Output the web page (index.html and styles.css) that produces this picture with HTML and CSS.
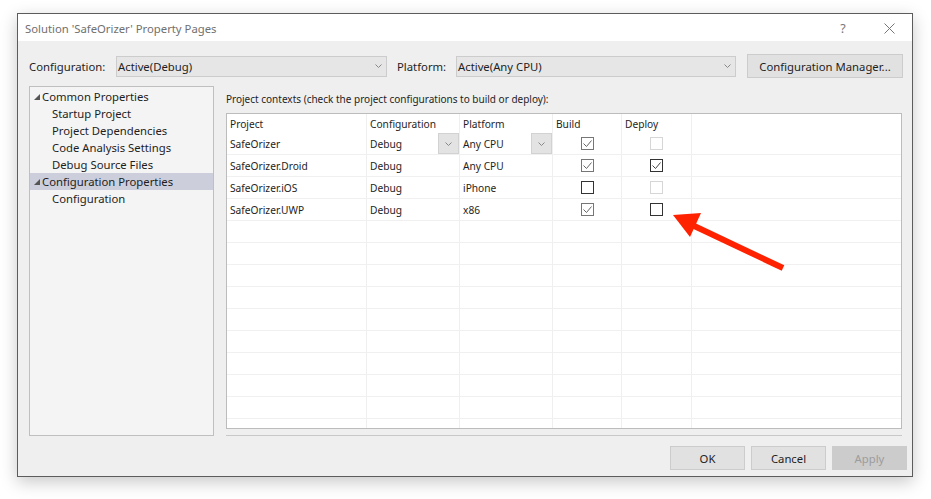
FILE: index.html
```html
<!DOCTYPE html>
<html>
<head>
<meta charset="utf-8">
<title>Solution 'SafeOrizer' Property Pages</title>
<link rel="stylesheet" href="styles.css">
</head>
<body>
<div class="window">
  <div class="titlebar">
    <span class="title">Solution 'SafeOrizer' Property Pages</span>
    <span class="help">?</span>
    <svg class="close" width="11" height="11" viewBox="0 0 11 11"><path d="M0.5 0.5 L10.5 10.5 M10.5 0.5 L0.5 10.5" stroke="#777" stroke-width="1" fill="none"/></svg>
  </div>
  <div class="content">
    <div class="toprow">
      <span class="lbl lbl-config">Configuration:</span>
      <div class="combo combo-config"><span>Active(Debug)</span><svg class="chev" width="7" height="4" viewBox="0 0 7 4"><path d="M0.5 0.5 L3.5 3.5 L6.5 0.5" stroke="#888" fill="none"/></svg></div>
      <span class="lbl lbl-platform">Platform:</span>
      <div class="combo combo-platform"><span>Active(Any CPU)</span><svg class="chev" width="7" height="4" viewBox="0 0 7 4"><path d="M0.5 0.5 L3.5 3.5 L6.5 0.5" stroke="#888" fill="none"/></svg></div>
      <button class="btn btn-cm">Configuration Manager...</button>
    </div>
    <div class="main">
      <div class="tree">
        <div class="node parent"><span class="tri"></span>Common Properties</div>
        <div class="node child">Startup Project</div>
        <div class="node child">Project Dependencies</div>
        <div class="node child">Code Analysis Settings</div>
        <div class="node child">Debug Source Files</div>
        <div class="node parent selected"><span class="tri"></span>Configuration Properties</div>
        <div class="node child">Configuration</div>
      </div>
      <div class="pane">
        <div class="caption">Project contexts (check the project configurations to build or deploy):</div>
        <div class="grid">
          <div class="row header">
            <div class="cell">Project</div>
            <div class="cell">Configuration</div>
            <div class="cell">Platform</div>
            <div class="cell">Build</div>
            <div class="cell">Deploy</div>
            <div class="cell"></div>
          </div>
          <div class="row">
            <div class="cell">SafeOrizer</div>
            <div class="cell dd"><span>Debug</span><span class="ddbtn"><svg width="7" height="4" viewBox="0 0 7 4"><path d="M0.5 0.5 L3.5 3.5 L6.5 0.5" stroke="#888" fill="none"/></svg></span></div>
            <div class="cell dd"><span>Any CPU</span><span class="ddbtn"><svg width="7" height="4" viewBox="0 0 7 4"><path d="M0.5 0.5 L3.5 3.5 L6.5 0.5" stroke="#888" fill="none"/></svg></span></div>
            <div class="cell center"><span class="cb cb-gray"><svg width="11" height="11" viewBox="0 0 11 11"><path d="M1.5 5.5 L4.5 8.5 L9.5 2.5" stroke="#666" fill="none"/></svg></span></div>
            <div class="cell center"><span class="cb cb-disabled"></span></div>
            <div class="cell"></div>
          </div>
          <div class="row">
            <div class="cell">SafeOrizer.Droid</div>
            <div class="cell">Debug</div>
            <div class="cell">Any CPU</div>
            <div class="cell center"><span class="cb cb-gray"><svg width="11" height="11" viewBox="0 0 11 11"><path d="M1.5 5.5 L4.5 8.5 L9.5 2.5" stroke="#666" fill="none"/></svg></span></div>
            <div class="cell center"><span class="cb cb-dark"><svg width="11" height="11" viewBox="0 0 11 11"><path d="M1.5 5.5 L4.5 8.5 L9.5 2.5" stroke="#444" fill="none"/></svg></span></div>
            <div class="cell"></div>
          </div>
          <div class="row">
            <div class="cell">SafeOrizer.iOS</div>
            <div class="cell">Debug</div>
            <div class="cell">iPhone</div>
            <div class="cell center"><span class="cb cb-dark"></span></div>
            <div class="cell center"><span class="cb cb-disabled"></span></div>
            <div class="cell"></div>
          </div>
          <div class="row">
            <div class="cell">SafeOrizer.UWP</div>
            <div class="cell">Debug</div>
            <div class="cell">x86</div>
            <div class="cell center"><span class="cb cb-gray"><svg width="11" height="11" viewBox="0 0 11 11"><path d="M1.5 5.5 L4.5 8.5 L9.5 2.5" stroke="#666" fill="none"/></svg></span></div>
            <div class="cell center"><span class="cb cb-dark"></span></div>
            <div class="cell"></div>
          </div>
          <div class="row"><div class="cell"></div><div class="cell"></div><div class="cell"></div><div class="cell"></div><div class="cell"></div><div class="cell"></div></div>
          <div class="row"><div class="cell"></div><div class="cell"></div><div class="cell"></div><div class="cell"></div><div class="cell"></div><div class="cell"></div></div>
          <div class="row"><div class="cell"></div><div class="cell"></div><div class="cell"></div><div class="cell"></div><div class="cell"></div><div class="cell"></div></div>
          <div class="row"><div class="cell"></div><div class="cell"></div><div class="cell"></div><div class="cell"></div><div class="cell"></div><div class="cell"></div></div>
          <div class="row"><div class="cell"></div><div class="cell"></div><div class="cell"></div><div class="cell"></div><div class="cell"></div><div class="cell"></div></div>
          <div class="row"><div class="cell"></div><div class="cell"></div><div class="cell"></div><div class="cell"></div><div class="cell"></div><div class="cell"></div></div>
          <div class="row"><div class="cell"></div><div class="cell"></div><div class="cell"></div><div class="cell"></div><div class="cell"></div><div class="cell"></div></div>
          <div class="row"><div class="cell"></div><div class="cell"></div><div class="cell"></div><div class="cell"></div><div class="cell"></div><div class="cell"></div></div>
          <div class="row"><div class="cell"></div><div class="cell"></div><div class="cell"></div><div class="cell"></div><div class="cell"></div><div class="cell"></div></div>
          <div class="row"><div class="cell"></div><div class="cell"></div><div class="cell"></div><div class="cell"></div><div class="cell"></div><div class="cell"></div></div>
        </div>
        <div class="sep"></div>
      </div>
    </div>
    <div class="buttons">
      <button class="btn">OK</button>
      <button class="btn">Cancel</button>
      <button class="btn disabled">Apply</button>
    </div>
  </div>
</div>
<svg class="arrow" width="931" height="499" viewBox="0 0 931 499">
  <line x1="690" y1="224" x2="783" y2="268" stroke="#ff2200" stroke-width="6"/>
  <polygon points="673,215 701,213 690,237" fill="#ff2200"/>
</svg>
</body>
</html>
```

FILE: styles.css
```css
html, body {
  margin: 0;
  padding: 0;
  background: #ffffff;
}
body {
  font-family: "Noto Sans", "Open Sans", sans-serif;
  font-size: 11.3px;
  color: #1e1e1e;
  position: relative;
  width: 931px;
  height: 499px;
  overflow: hidden;
}
.window {
  margin: 13px 0 0 17px;
  width: 896px;
  height: 464px;
  box-sizing: border-box;
  border: 1px solid #5c5c5c;
  box-shadow: 0 5px 16px rgba(0, 0, 0, 0.22);
  background: #efefef;
  display: flex;
  flex-direction: column;
}
.titlebar {
  height: 27px;
  flex: none;
  background: #ffffff;
  display: flex;
  align-items: center;
  padding: 1px 17px 0 7px;
  box-sizing: border-box;
}
.title {
  flex: 1;
  color: #707070;
  white-space: nowrap;
}
.help {
  width: 12px;
  text-align: center;
  color: #777;
  font-size: 12.5px;
}
.close {
  margin-left: 35px;
  display: block;
}
.content {
  flex: 1;
  display: flex;
  flex-direction: column;
}
.toprow {
  display: flex;
  align-items: center;
  margin-top: 13px;
  height: 24px;
  padding: 0 9px 0 11px;
}
.lbl {
  white-space: nowrap;
}
.lbl-config { width: 87px; }
.lbl-platform { width: 59px; margin-left: 10px; }
.combo {
  height: 21px;
  box-sizing: border-box;
  border: 1px solid #cccccc;
  background: #e6e6e6;
  display: flex;
  align-items: center;
  justify-content: space-between;
  padding: 0 4px 0 1px;
}
.combo-config { width: 271px; }
.combo-platform { width: 280px; }
.chev { display: block; }
.btn {
  font-family: inherit;
  font-size: 11.3px;
  color: #1e1e1e;
  width: 75px;
  height: 24px;
  box-sizing: border-box;
  border: 1px solid #cccccc;
  background: #e1e1e1;
  padding: 0;
  margin: 0;
}
.btn-cm {
  width: 156px;
  margin-left: 11px;
}
.btn.disabled {
  background: #cccccc;
  border-color: #cccccc;
  color: #9c9c9c;
}
.main {
  display: flex;
  margin-top: 8px;
  height: 350px;
  padding-left: 11px;
}
.tree {
  width: 185px;
  box-sizing: border-box;
  border: 1px solid #bfbfbf;
  background: #f4f4f4;
  padding-top: 1px;
}
.node {
  height: 17px;
  line-height: 17px;
  white-space: nowrap;
  display: flex;
  align-items: center;
  box-sizing: border-box;
}
.node.parent { padding-left: 4px; }
.node.child { padding-left: 22px; }
.node.selected { background: #cccedb; }
.tri {
  width: 0;
  height: 0;
  border-style: solid;
  border-width: 0 0 6px 6px;
  border-color: transparent transparent #555555 transparent;
  margin-right: 2px;
  margin-top: 1px;
}
.pane {
  margin-left: 12px;
  width: 676px;
  display: flex;
  flex-direction: column;
}
.caption {
  height: 27px;
  box-sizing: border-box;
  padding-top: 5px;
  line-height: 16px;
  white-space: nowrap;
  font-size: 10px;
}
.grid {
  height: 316px;
  box-sizing: border-box;
  border: 1px solid #bcbcbc;
  background: #ffffff;
  overflow: hidden;
  font-size: 10.2px;
}
.row {
  display: grid;
  grid-template-columns: 140px 93px 93px 69px 70px 1fr;
  height: 22px;
}
.row.header { height: 19px; }
.cell {
  box-sizing: border-box;
  border-right: 1px solid #efefef;
  border-bottom: 1px solid #f0f0f0;
  padding-left: 3px;
  padding-top: 1px;
  display: flex;
  align-items: center;
  white-space: nowrap;
  overflow: hidden;
}
.row .cell:last-child { border-right: none; }
.row.header .cell { border-bottom: none; }
.cell.dd {
  justify-content: space-between;
  align-items: stretch;
  padding-top: 0;
}
.cell.dd > span:first-child {
  display: flex;
  align-items: center;
  padding-top: 1px;
}
.ddbtn {
  width: 21px;
  box-sizing: border-box;
  background: #e3e3e3;
  border: 1px solid #d2d2d2;
  display: flex;
  align-items: center;
  justify-content: center;
}
.ddbtn svg { display: block; }
.cell.center {
  justify-content: center;
  padding-left: 0;
  padding-top: 0;
}
.cb {
  width: 13px;
  height: 13px;
  box-sizing: border-box;
  border: 1px solid #333333;
  background: #ffffff;
  display: flex;
  align-items: center;
  justify-content: center;
}
.cb svg { display: block; }
.cb-gray { border-color: #767676; }
.cb-dark { border-color: #333333; }
.cb-disabled { border-color: #d6d6d6; }
.sep {
  margin-top: 6px;
  height: 1px;
  background: #c8c8c8;
}
.buttons {
  display: flex;
  justify-content: flex-end;
  gap: 6px;
  margin-top: 10px;
  padding-right: 5px;
}
.arrow {
  position: absolute;
  left: 0;
  top: 0;
  pointer-events: none;
}
```
